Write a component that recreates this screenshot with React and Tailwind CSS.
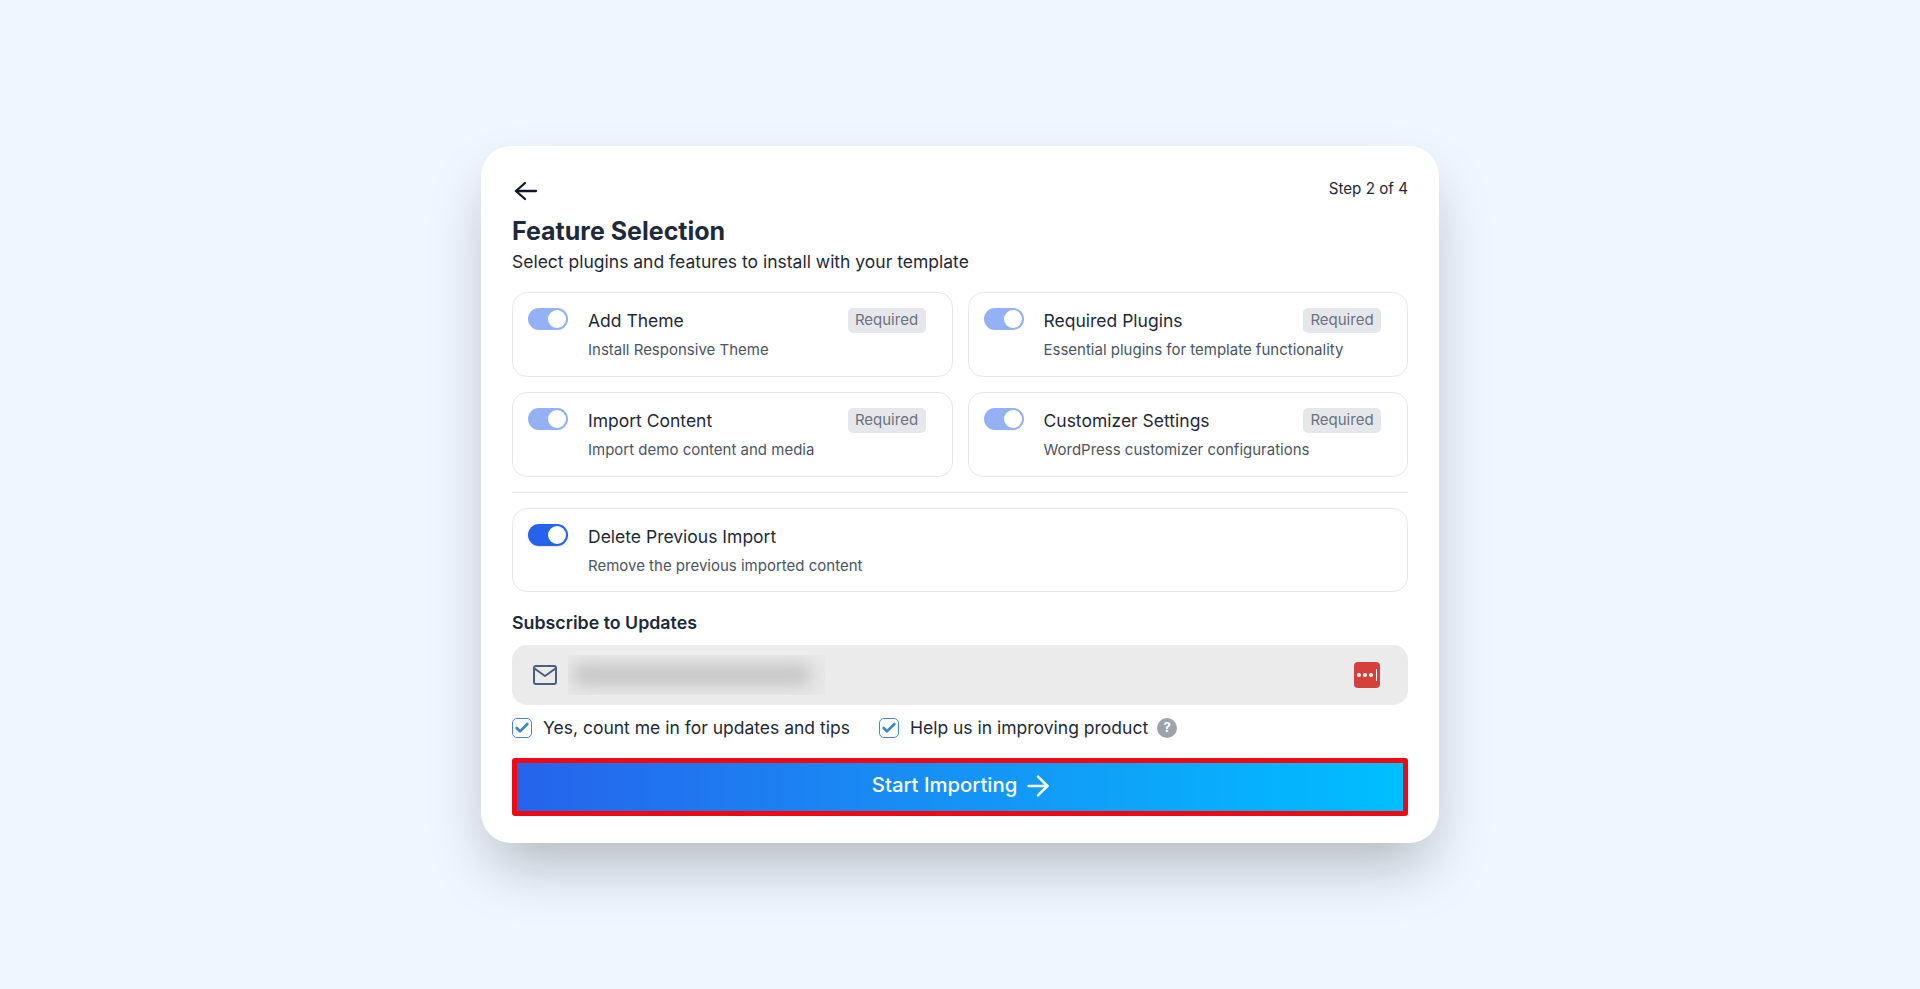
import React from "react";
import { ArrowRight, Check } from "lucide-react";

const Toggle = ({ muted }) => (
  <div
    className={`flex h-[22px] w-10 flex-shrink-0 items-center justify-end rounded-full pr-0.5 ${
      muted ? "bg-[#93b1f4]" : "bg-[#2563eb] shadow-sm"
    }`}
  >
    <div className="h-[18px] w-[18px] rounded-full bg-white" />
  </div>
);

const FeatureCard = ({ title, desc, required, muted, short }) => (
  <div
    className={`flex gap-5 rounded-[15px] border border-[#e5e7eb] bg-white pl-[15px] pr-[26px] pt-[15px] ${
      short ? "h-[84px]" : "h-[85px]"
    }`}
  >
    <Toggle muted={muted} />
    <div className="flex-1">
      <div className="flex items-start justify-between">
        <span className="mt-[1px] text-[17.5px] leading-[24px] text-[#1f2937]">{title}</span>
        {required && (
          <span className="flex h-[25px] w-[78px] items-center justify-center rounded-[5px] bg-[#e5e7eb] text-[15px] text-[#6b7280]">
            Required
          </span>
        )}
      </div>
      <p className="mt-[6px] text-[15px] leading-[22px] text-[#4b5563]">{desc}</p>
    </div>
  </div>
);

const Checkbox = ({ label }) => (
  <label className="flex items-center gap-[11px]">
    <span className="flex h-5 w-5 items-center justify-center rounded-[5px] border-[1.5px] border-[#4a86cf] bg-white">
      <Check size={16} strokeWidth={4} className="text-[#3d84c6]" />
    </span>
    <span className="text-[17.5px] text-[#1f2937]">{label}</span>
  </label>
);

export default function App() {
  return (
    <div className="flex min-h-screen items-center justify-center bg-[#eff6ff] font-[family-name:Inter,sans-serif]">
      <div className="h-[697px] w-[958px] rounded-[30px] bg-white px-[31px] pt-8 shadow-[0_30px_60px_-10px_rgba(0,0,0,0.26)]">
        <div className="flex h-[31px] items-start justify-between">
          <svg width="24" height="20" viewBox="0 0 24 20" fill="none" stroke="#111827" strokeWidth="2.3" strokeLinecap="round" strokeLinejoin="round" className="ml-[2px] mt-[3px]">
            <path d="M22 10H2" />
            <path d="M11 2 2 10l9 8" />
          </svg>
          <span className="text-[15.2px] leading-[22px] text-[#1f2937]">Step 2 of 4</span>
        </div>
        <h1 className="mt-[6px] text-[25px] font-bold leading-[32px] text-[#1e293b]">Feature Selection</h1>
        <p className="mt-[2px] text-[17.5px] leading-[26px] text-[#1f2937]">
          Select plugins and features to install with your template
        </p>

        <div className="mt-[17px] grid grid-cols-2 gap-x-[15px] gap-y-[15px]">
          <FeatureCard title="Add Theme" desc="Install Responsive Theme" required muted />
          <FeatureCard title="Required Plugins" desc="Essential plugins for template functionality" required muted />
          <FeatureCard title="Import Content" desc="Import demo content and media" required muted />
          <FeatureCard title="Customizer Settings" desc="WordPress customizer configurations" required muted />
        </div>

        <div className="mt-[15px] border-t border-[#e5e7eb]" />

        <div className="mt-[15px]">
          <FeatureCard short title="Delete Previous Import" desc="Remove the previous imported content" />
        </div>

        <h2 className="mt-[19px] text-[17.8px] font-semibold leading-[24px] text-[#1e293b]">Subscribe to Updates</h2>

        <div className="mt-[10px] flex h-[60px] items-center rounded-[15px] bg-[#ebebeb] pl-[21px] pr-[28px]">
          <svg width="24" height="20" viewBox="0 0 24 20" fill="none" stroke="#4b5f7a" strokeWidth="2" strokeLinejoin="round" strokeLinecap="round">
            <rect x="1" y="1" width="22" height="18" rx="2" />
            <path d="M1.5 3.5 12 11l10.5-7.5" />
          </svg>
          <div className="ml-[11px] flex h-10 w-[257px] items-center overflow-hidden bg-[#e8e8e8] pl-[4px]">
            <div className="h-[22px] w-[240px] rounded-full bg-[#c6c6c6] blur-[8px]" />
          </div>
          <div className="ml-auto flex h-[26px] w-[26px] items-center justify-center gap-[2px] rounded-[4px] bg-[#d5403a]">
            <span className="h-1 w-1 rounded-full bg-white" />
            <span className="h-1 w-1 rounded-full bg-white" />
            <span className="h-1 w-1 rounded-full bg-white" />
            <span className="ml-[1px] h-[12px] w-[1.5px] bg-white" />
          </div>
        </div>

        <div className="mt-[13px] flex h-5 items-center">
          <Checkbox label="Yes, count me in for updates and tips" />
          <div className="ml-[29px]">
            <Checkbox label="Help us in improving product" />
          </div>
          <span className="ml-[9px] flex h-5 w-5 items-center justify-center rounded-full bg-[#9ca3af] text-[13px] font-bold text-white">
            ?
          </span>
        </div>

        <button className="mt-[20px] flex h-[58px] w-full items-center justify-center gap-[5px] rounded-[3px] border-[5px] border-[#ee0a14] bg-gradient-to-r from-[#2563eb] to-[#00bfff] pb-[3px] pl-[6px] text-[20.3px] font-medium text-white">
          Start Importing
          <ArrowRight size={32} strokeWidth={1.9} />
        </button>
      </div>
    </div>
  );
}
